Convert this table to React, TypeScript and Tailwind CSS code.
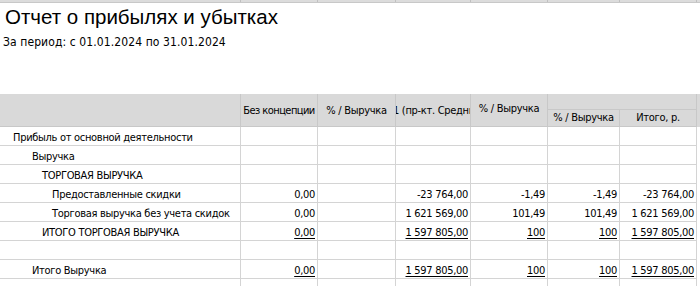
import React from "react";

const cols = "grid grid-cols-[241px_77px_78px_75px_77px_72px_77px]";
const line = "border-[#d4d4d4]";

interface Row {
  label: string;
  indent: string;
  values: string[];
  total?: boolean;
}

const rows: Row[] = [
  { label: "Прибыль от основной деятельности", indent: "pl-[13px]", values: ["", "", "", "", "", ""] },
  { label: "Выручка", indent: "pl-[32px]", values: ["", "", "", "", "", ""] },
  { label: "ТОРГОВАЯ ВЫРУЧКА", indent: "pl-[42px]", values: ["", "", "", "", "", ""] },
  {
    label: "Предоставленные скидки",
    indent: "pl-[52px]",
    values: ["0,00", "", "-23 764,00", "-1,49", "-1,49", "-23 764,00"],
  },
  {
    label: "Торговая выручка без учета скидок",
    indent: "pl-[52px]",
    values: ["0,00", "", "1 621 569,00", "101,49", "101,49", "1 621 569,00"],
  },
  {
    label: "ИТОГО ТОРГОВАЯ ВЫРУЧКА",
    indent: "pl-[42px]",
    values: ["0,00", "", "1 597 805,00", "100", "100", "1 597 805,00"],
    total: true,
  },
  { label: "", indent: "", values: ["", "", "", "", "", ""] },
  {
    label: "Итого Выручка",
    indent: "pl-[32px]",
    values: ["0,00", "", "1 597 805,00", "100", "100", "1 597 805,00"],
    total: true,
  },
  { label: "", indent: "", values: ["", "", "", "", "", ""] },
];

const App = () => {
  return (
    <div className="w-[700px] h-[286px] overflow-hidden bg-white text-black font-['Tahoma','DejaVu_Sans_Condensed','Liberation_Sans',sans-serif]">
      {/* frozen header strip */}
      <div className={`${cols} h-[3px] bg-[#dcdcdc] border-b border-[#c8c8c8]`}>
        {[0, 1, 2, 3, 4, 5, 6].map((i) => (
          <div key={i} className="border-r border-[#c0c0c0]" />
        ))}
      </div>

      <div className="h-[91px] pl-[5px]">
        <div className="text-[20.5px] leading-[26px] pt-[1px] font-['Liberation_Sans',sans-serif]">
          Отчет о прибылях и убытках
        </div>
        <div className="text-[12px] leading-[15px] mt-[5px] -ml-[2px] tracking-[0.1px]">
          За период: с 01.01.2024 по 31.01.2024
        </div>
      </div>

      {/* table header */}
      <div className={`${cols} grid-rows-[16px_17px] bg-[#d9d9d9] text-[11px] tracking-[-0.3px]`}>
        <div className="row-span-2 border-r border-b border-[#c8c8c8]" />
        <div className="row-span-2 border-r border-b border-[#c8c8c8] flex items-center justify-center pt-[2px] whitespace-nowrap overflow-hidden tracking-[-0.55px]">
          Без концепции
        </div>
        <div className="row-span-2 border-r border-b border-[#c8c8c8] flex items-center justify-center pt-[2px] whitespace-nowrap overflow-hidden">
          % / Выручка
        </div>
        <div className="row-span-2 border-r border-b border-[#c8c8c8] flex items-center justify-start pt-[2px] whitespace-nowrap overflow-hidden">
          <span className="-ml-[3px]">1 (пр-кт. Средний</span>
        </div>
        <div className="row-span-2 border-r border-b border-[#c8c8c8] flex items-center justify-center pb-[1px] whitespace-nowrap overflow-hidden">
          % / Выручка
        </div>
        <div className="col-span-2 border-r border-b border-[#c8c8c8]" />
        <div className="border-r border-b border-[#c8c8c8] flex items-center justify-center pt-[1px] whitespace-nowrap overflow-hidden">
          % / Выручка
        </div>
        <div className="border-r border-b border-[#c8c8c8] flex items-center justify-center pt-[1px] whitespace-nowrap overflow-hidden">
          Итого, р.
        </div>
      </div>

      {/* data rows */}
      {rows.map((row, r) => (
        <div key={r} className={`${cols} h-[19px] text-[11px] leading-[18px] tracking-[-0.3px]`}>
          <div className={`border-r border-b ${line} ${row.indent} pt-[2px] whitespace-nowrap overflow-hidden`}>
            {row.label}
          </div>
          {row.values.map((v, c) => (
            <div
              key={c}
              className={`border-r border-b ${line} text-right pr-[2px] pt-[2px] whitespace-nowrap overflow-hidden`}
            >
              <span className={row.total ? "underline underline-offset-2" : ""}>{v}</span>
            </div>
          ))}
        </div>
      ))}
    </div>
  );
};

export default App;
